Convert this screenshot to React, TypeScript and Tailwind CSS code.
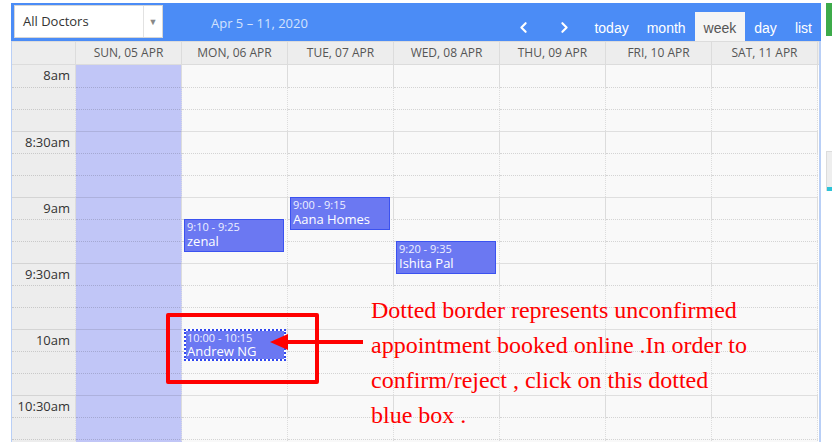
import { ChevronLeft, ChevronRight } from "lucide-react";

const days = [
  "SUN, 05 APR",
  "MON, 06 APR",
  "TUE, 07 APR",
  "WED, 08 APR",
  "THU, 09 APR",
  "FRI, 10 APR",
  "SAT, 11 APR",
];

// 10 minute slots starting at 8am
const labels: Record<number, string> = {
  0: "8am",
  3: "8:30am",
  6: "9am",
  9: "9:30am",
  12: "10am",
  15: "10:30am",
};

const events = [
  { time: "9:10 - 9:25", title: "zenal", left: 172, top: 154 },
  { time: "9:00 - 9:15", title: "Aana Homes", left: 278, top: 132 },
  { time: "9:20 - 9:35", title: "Ishita Pal", left: 384, top: 176 },
];

const views = ["today", "month", "week", "day", "list"];

export default function App() {
  return (
    <div className="relative w-[832px] h-[442px] overflow-hidden bg-white font-['Open_Sans',sans-serif]">
      <div className="ml-[11px] mt-[3px] w-[810px]">
        {/* toolbar */}
        <div className="flex h-[38px] items-end bg-[#4b8cf6]">
          <div className="mb-[3px] ml-[3px] flex h-[33px] w-[149px] self-start mt-[2px] items-center border border-[#d6d6d6] bg-white">
            <span className="flex-1 pl-[8px] text-[13px] text-[#333]">All Doctors</span>
            <span className="flex h-full w-[19px] items-center justify-center border-l border-[#e2e2e2] text-[9px] text-[#888]">
              ▼
            </span>
          </div>
          <div className="mb-[8px] ml-[48px] text-[13px] text-[#d3e2fd]">Apr 5 – 11, 2020</div>
          <div className="ml-auto flex items-end font-['Liberation_Sans',Arial,sans-serif] text-[14px]">
            <button className="flex h-[29px] w-[41px] items-center justify-center pt-[2px] text-white">
              <ChevronLeft size={17} strokeWidth={3} />
            </button>
            <button className="flex h-[29px] w-[41px] items-center justify-center pt-[2px] text-white">
              <ChevronRight size={17} strokeWidth={3} />
            </button>
            {views.map((v) => (
              <button
                key={v}
                className={
                  "h-[29px] px-[9px] pt-[4px] " +
                  (v === "week" ? "bg-[#f5f5f5] text-[#555]" : "text-white")
                }
              >
                {v}
              </button>
            ))}
          </div>
        </div>

        <div className="border-l border-r-2 border-[#b9cff6]">
          {/* day header */}
          <div className="grid grid-cols-[64px_repeat(7,106px)] border-t border-b border-[#dcdcdc] bg-[#ededed]">
            <div className="h-[22px] border-r border-[#dcdcdc]" />
            {days.map((d) => (
              <div
                key={d}
                className="flex h-[22px] items-center justify-center border-r border-[#dcdcdc] text-[12px] text-[#555]"
              >
                {d}
              </div>
            ))}
          </div>

          {/* time grid */}
          <div className="relative">
            {Array.from({ length: 18 }).map((_, i) => {
              const line =
                i === 0
                  ? ""
                  : i % 3 === 0
                  ? "border-t border-solid border-t-black/10"
                  : "border-t border-dotted border-t-black/15";
              return (
                <div key={i} className="grid grid-cols-[64px_repeat(7,106px)]">
                  <div
                    className={
                      "flex h-[22px] items-center justify-end border-r border-r-[#dcdcdc] bg-[#ededed] pr-[5px] text-[13px] text-[#333] " +
                      line
                    }
                  >
                    {labels[i] ?? ""}
                  </div>
                  {days.map((d, j) => (
                    <div
                      key={d}
                      className={
                        "h-[22px] border-r border-r-[#dcdcdc] " +
                        (j === 0 ? "bg-[#c1c6f7] " : "bg-[#f9f9f9] ") +
                        line
                      }
                    />
                  ))}
                </div>
              );
            })}

            {events.map((e) => (
              <div
                key={e.title}
                className="absolute h-[33px] w-[100px] border border-[#3b52f0] bg-[#6b78f2] px-[2px] text-white"
                style={{ left: e.left, top: e.top }}
              >
                <div className="text-[11px] leading-[14px] text-[#eef0ff]">{e.time}</div>
                <div className="text-[13px] leading-[15px]">{e.title}</div>
              </div>
            ))}

            {/* unconfirmed appointment */}
            <div className="absolute left-[172px] top-[264px] h-[32px] w-[102px] border-2 border-dotted border-[#3148ef] bg-white">
              <div className="h-full bg-[#6b78f2] px-[1px] text-white">
                <div className="text-[11px] leading-[13px] text-[#eef0ff]">10:00 - 10:15</div>
                <div className="text-[13px] leading-[15px]">Andrew NG</div>
              </div>
            </div>
          </div>
        </div>
      </div>

      {/* side widgets */}
      <div className="absolute left-[826px] top-[3px] h-[33px] w-[6px] bg-[#3dab4a]" />
      <div className="absolute left-[826px] top-[151px] h-[40px] w-[6px] border-l border-t border-[#dcdcdc] bg-[#eeeeee]">
        <div className="mt-[35px] h-[4px] bg-[#2cc3d7]" />
      </div>

      {/* annotation */}
      <div className="absolute left-[166px] top-[313px] h-[71px] w-[153px] rounded-[2px] border-4 border-[#ff0000]" />
      <svg className="absolute left-[266px] top-[332px]" width="100" height="22" viewBox="0 0 100 22">
        <line x1="20" y1="10" x2="97" y2="10" stroke="#ff0000" strokeWidth="4" />
        <polygon points="4,10 22,2 22,18" fill="#ff0000" />
      </svg>
      <div className="absolute left-[371px] top-[293px] font-['Liberation_Serif','Times_New_Roman',serif] text-[24px] leading-[35px] text-[#ff0000]">
        Dotted border represents unconfirmed
        <br />
        appointment booked online .In order to
        <br />
        confirm/reject , click on this dotted
        <br />
        blue box .
      </div>
    </div>
  );
}
